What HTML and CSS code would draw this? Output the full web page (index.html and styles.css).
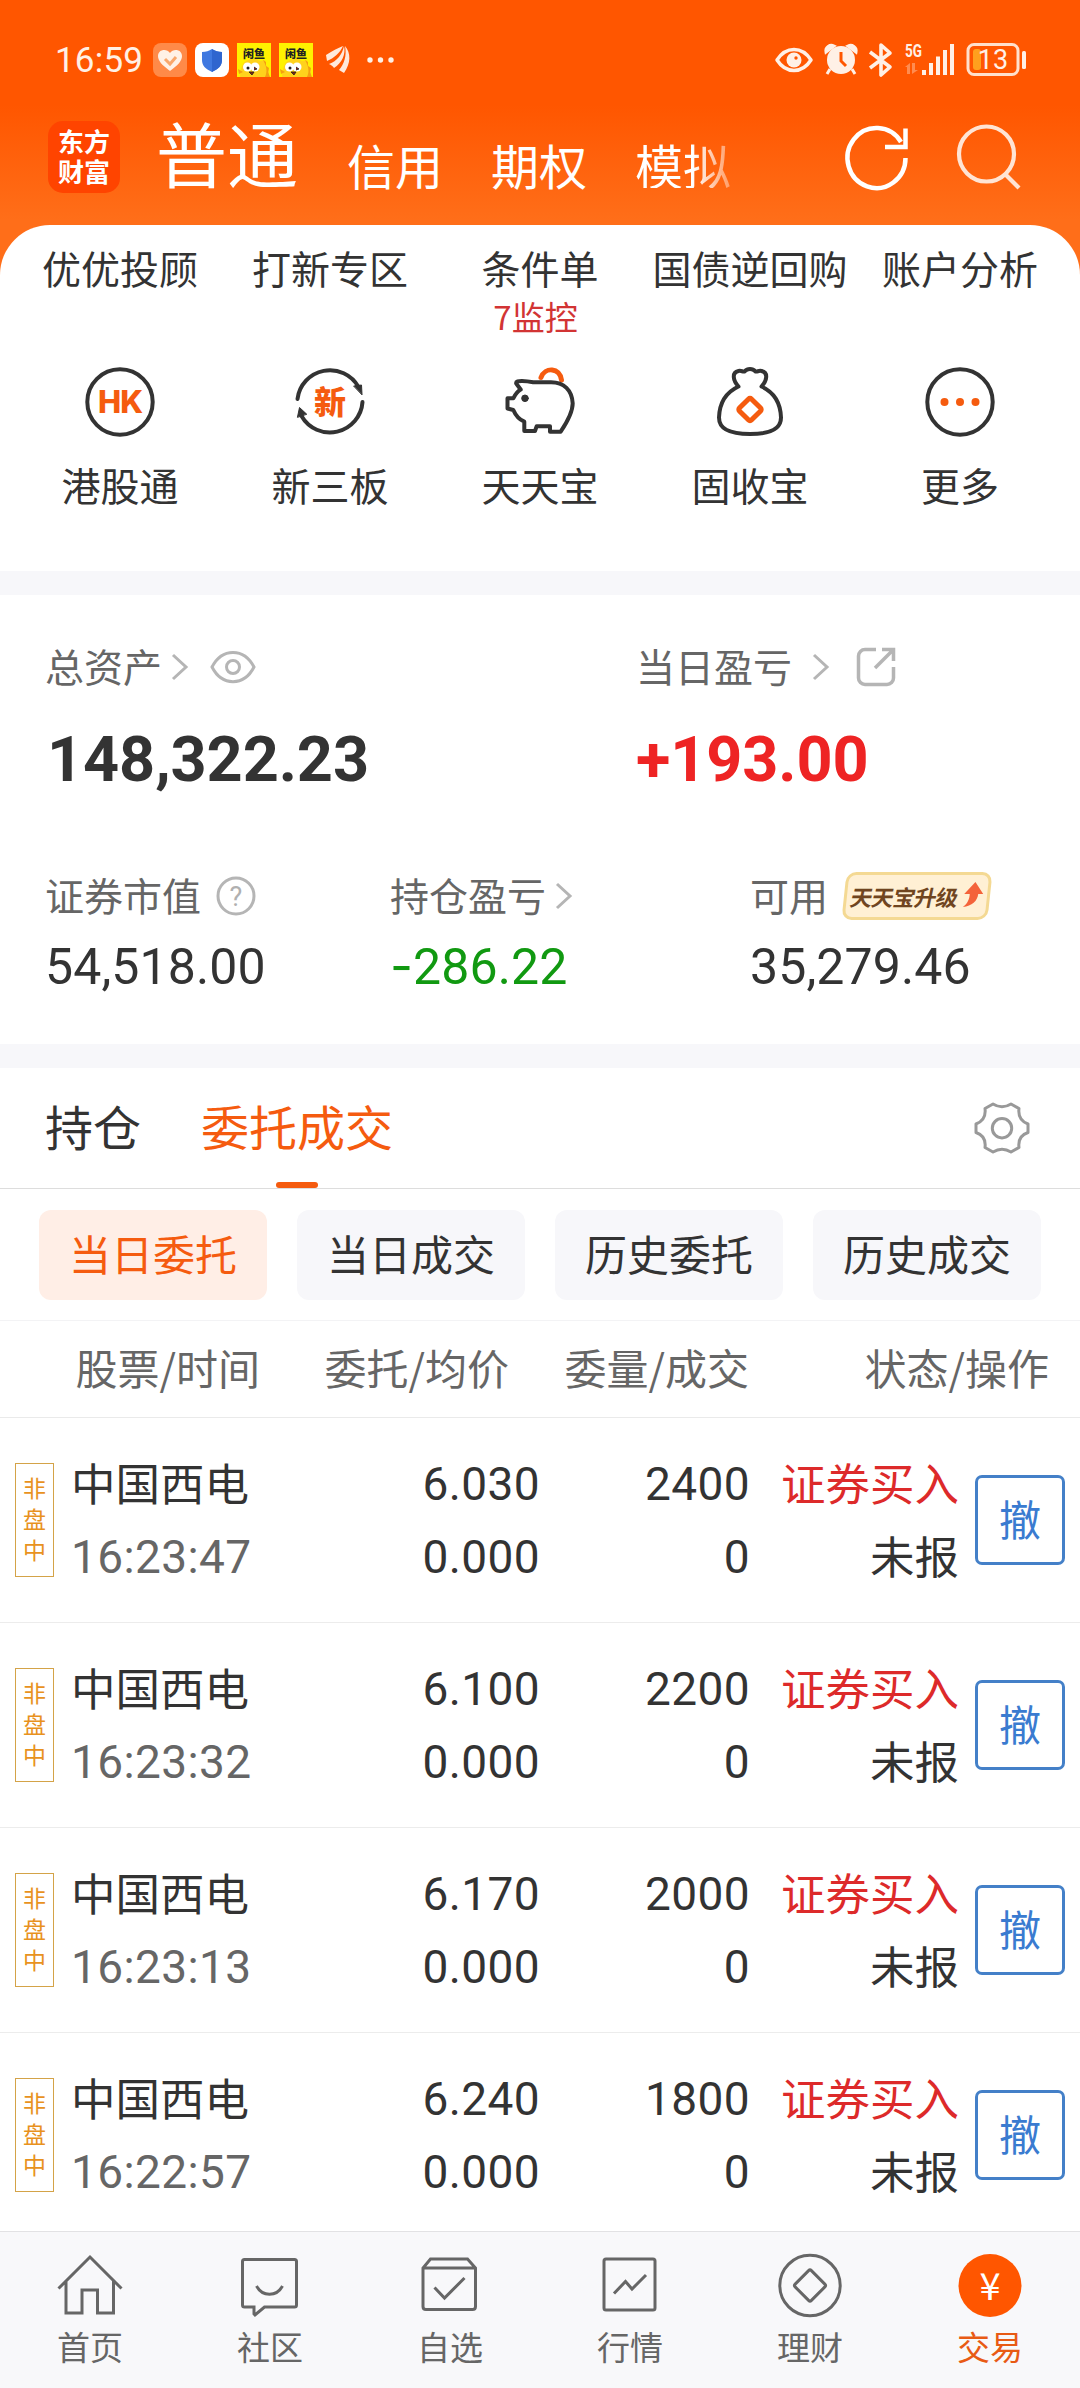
FILE: index.html
```
<!DOCTYPE html>
<html lang="zh-CN">
<head>
	<meta charset="utf-8">
	<title>交易</title>
	<link rel="stylesheet" href="styles.css">
</head>
<body>
	<div class="header">
		<div class="status-bar">
			<span class="clock num">16:59</span>
			<div class="notices">
				<svg width="34" height="34" viewBox="0 0 34 34">
					<rect width="34" height="34" rx="8" fill="#ff8a48"/>
					<path d="M17 28C9 22 5 18 5 13c0-7 9-8 12-3 3-5 12-4 12 3 0 5-4 9-12 15z" fill="#fff1e6"/>
					<path d="M12 16l5 5 6-7" fill="none" stroke="#f9a76c" stroke-width="3"/>
				</svg>
				<svg width="34" height="34" viewBox="0 0 34 34">
					<rect width="34" height="34" rx="8" fill="#fff"/>
					<path d="M17 6c3 2 6 3 10 3v8c0 6-4 9-10 12C11 26 7 23 7 17V9c4 0 7-1 10-3z" fill="#3f78e0"/>
					<path d="M17 6c3 2 6 3 10 3v8c0 6-4 9-10 12z" fill="#2f65cf"/>
				</svg>
				<svg class="fish" width="34" height="34" viewBox="0 0 34 34">
					<rect width="34" height="34" fill="#fff200"/>
					<text x="17" y="14.5" text-anchor="middle">闲鱼</text>
					<path d="M3 34c1-9 2-15 8-17 5-2 9-1 12 1l5-1 1 5 3 4v8z" fill="#ffd21c"/>
					<path d="M26 17l3 2v4l3 2-1 4 2 5h-5c3-6 1-12-2-17z" fill="#f5a010"/>
					<circle cx="10.500" cy="24" r="4.500" fill="#fff"/><circle cx="18" cy="24" r="4.500" fill="#fff"/>
					<circle cx="11" cy="25" r="1.500" fill="#222"/>
					<path d="M17 24l3 2-3 1M12 29h5l-2 3z" fill="#8a1f10" stroke="#222" stroke-width=".8"/>
					<path d="M1 26l5 3-4 2z" fill="#f5a010"/>
				</svg>
				<svg class="fish" width="34" height="34" viewBox="0 0 34 34">
					<rect width="34" height="34" fill="#fff200"/>
					<text x="17" y="14.5" text-anchor="middle">闲鱼</text>
					<path d="M3 34c1-9 2-15 8-17 5-2 9-1 12 1l5-1 1 5 3 4v8z" fill="#ffd21c"/>
					<path d="M26 17l3 2v4l3 2-1 4 2 5h-5c3-6 1-12-2-17z" fill="#f5a010"/>
					<circle cx="10.500" cy="24" r="4.500" fill="#fff"/><circle cx="18" cy="24" r="4.500" fill="#fff"/>
					<circle cx="11" cy="25" r="1.500" fill="#222"/>
					<path d="M17 24l3 2-3 1M12 29h5l-2 3z" fill="#8a1f10" stroke="#222" stroke-width=".8"/>
					<path d="M1 26l5 3-4 2z" fill="#f5a010"/>
				</svg>
				<svg class="wing" width="26" height="28" viewBox="0 0 26 28" fill="#ffe9dc">
					<path d="M1 9C7 5 13 2 18 0c-3 7-9 12-16 15zM4 18c8-3 13-9 15-18 2 8-2 17-10 22-1-2-3-3-5-4zM14 24c5-6 8-14 6-24 6 7 6 17-1 27z"/>
				</svg>
				<svg width="28" height="8" viewBox="0 0 28 8" fill="#fff0e6">
					<circle cx="3" cy="4" r="2.700"/><circle cx="13.500" cy="4" r="2.700"/><circle cx="24" cy="4" r="2.700"/>
				</svg>
			</div>
			<svg class="system" width="254" height="36" viewBox="0 0 254 36" fill="#fff0e6">
				<!-- eye -->
				<path d="M3 18C12 4 28 4 37 18 28 32 12 32 3 18z" fill="none" stroke="#fff0e6" stroke-width="3.500" stroke-linejoin="round"/>
				<circle cx="20" cy="18" r="7.500"/><circle cx="22" cy="16" r="1.700" fill="#ff5600"/>
				<!-- alarm -->
				<circle cx="67" cy="18" r="14"/>
				<path d="M52 10c-1-5 4-8 8-6zM82 10c1-5-4-8-8-6zM56 27l-3 5M78 27l3 5" stroke="#fff0e6" stroke-width="3"/>
				<path d="M67 10v9l5 5" fill="none" stroke="#ff5600" stroke-width="3"/>
				<!-- bluetooth -->
				<path d="M96 10l20 15-9 8V3l9 8-20 15" fill="none" stroke="#fff0e6" stroke-width="3.600" stroke-linejoin="round"/>
				<text class="net" x="131" y="15" textLength="17" lengthAdjust="spacingAndGlyphs">5G</text>
				<path d="M131 25l5-4v11h-3v-7zM138 21h3v7h3l-6 4z" opacity=".35"/>
				<path d="M148 28h4v5h-4zM155 21h4v12h-4zM162 14.500h4V33h-4zM169 8h4v25h-4zM176 2h4v31h-4z"/>
				<!-- battery -->
				<rect x="194" y="2.500" width="50" height="30" rx="6" fill="none" stroke="#ffe0cc" stroke-width="3"/>
				<rect x="199" y="7" width="8" height="21" rx="3" fill="#ffa01e"/>
				<text class="level" x="219" y="27" text-anchor="middle">13</text>
				<rect x="248" y="9" width="4" height="18" rx="1.500"/>
			</svg>
		</div>

		<div class="top-nav">
			<div class="brand">东方<br>财富</div>
			<div class="accounts">
				<span class="account current">普通</span>
				<span class="account">信用</span>
				<span class="account">期权</span>
				<span class="account faded">模拟</span>
			</div>
			<div class="top-actions">
				<svg width="64" height="68" viewBox="0 0 64 68" fill="none" stroke="#fff" stroke-width="4.500">
					<path d="M60.500 34A29 30 0 1 1 56 18M40 23h20.500V4.500"/>
				</svg>
				<svg width="64" height="68" viewBox="0 0 64 68" fill="none" stroke="#ffe4d4" stroke-width="4.200">
					<circle cx="29.500" cy="30" r="27.500"/><path d="M48 50l14 14"/>
				</svg>
			</div>
		</div>
	</div>

	<div class="shortcuts">
		<div class="shortcut">优优投顾</div>
		<div class="shortcut">打新专区</div>
		<div class="shortcut">条件单<span class="monitor">7监控</span></div>
		<div class="shortcut">国债逆回购</div>
		<div class="shortcut">账户分析</div>

		<div class="shortcut">
			<svg class="ico" width="70" height="70" viewBox="0 0 70 70">
				<circle cx="35" cy="35" r="32.700"/>
				<text class="hk" x="35" y="46" text-anchor="middle">HK</text>
			</svg>
			港股通
		</div>
		<div class="shortcut">
			<svg class="ico" width="70" height="70" viewBox="0 0 70 70">
				<path d="M2.500 32a32.700 32.700 0 0 1 61-12M67.500 35a32.700 32.700 0 0 1-61 14"/>
				<path class="dark" d="M59 19l7.500-1 .5 9.500zM2.500 50l2-9.500 7 6.500z"/>
				<text class="xin" x="35" y="46.500" text-anchor="middle">新</text>
			</svg>
			新三板
		</div>
		<div class="shortcut">
			<svg class="ico" width="70" height="70" viewBox="0 0 70 70">
				<path class="org" d="M36 10.500c4-11 19-10 20.500 2.500"/>
				<path d="M15.700 22.500l-4.500-6c-1-4 11-2.500 17-1.200H46c13 0 21 8 21.700 21 0 9-5 18-12 28.400H45v-5.500H31.700L30 64H19.300v-9.300C13 52 10 47 8.300 43L2.500 41.500v-10.200h5.800c2-4 4-7 7.400-8.800z"/>
				<circle class="dark" cx="20" cy="31.300" r="3.300"/>
			</svg>
			天天宝
		</div>
		<div class="shortcut">
			<svg class="ico" width="70" height="70" viewBox="0 0 70 70">
				<path d="M23.500 19.500c-5.500-6-7-14 0-15.500 3-.7 4 1 6 .5 3-3.500 8-3.500 11 0 2 .5 3-1.200 6-.5 7 1.500 5.500 9.500 0 15.500 13 6 19 16 19.500 31C66 62 56 67 35 67S4 62 4 50.500c.5-15 6.500-25 19.500-31z"/>
				<rect class="org" x="26.500" y="34" width="17" height="17" rx="2" transform="rotate(45 35 42.500)"/>
			</svg>
			固收宝
		</div>
		<div class="shortcut">
			<svg class="ico" width="70" height="70" viewBox="0 0 70 70">
				<circle cx="35" cy="35" r="32.700"/>
				<g class="dot"><circle cx="19.500" cy="35" r="4"/><circle cx="35" cy="35" r="4"/><circle cx="50.500" cy="35" r="4"/></g>
			</svg>
			更多
		</div>
	</div>

	<div class="assets">
		<div class="totals">
			<div>
				<div class="label">总资产
					<svg class="arrow" width="18" height="28" viewBox="0 0 18 28"><path d="M2 2l13 12L2 26"/></svg>
					<svg class="eye" width="46" height="34" viewBox="0 0 46 34"><path d="M2 17C12-2.500 34-2.500 44 17 34 36.500 12 36.500 2 17z"/><circle cx="23" cy="17" r="6.500"/></svg>
				</div>
				<div class="total num">148,322.23</div>
			</div>
			<div>
				<div class="label">当日盈亏
					<svg class="arrow wide" width="18" height="28" viewBox="0 0 18 28"><path d="M2 2l13 12L2 26"/></svg>
					<svg class="share" width="40" height="40" viewBox="0 0 40 40"><path d="M20 2.500H9a6.500 6.500 0 0 0-6.500 6.500v22A6.500 6.500 0 0 0 9 37.500h22a6.500 6.500 0 0 0 6.500-6.500V20M26 2.500h11.500V14M37 3L19 21"/></svg>
				</div>
				<div class="total num up">+193.00</div>
			</div>
		</div>
		<div class="details">
			<div>
				<div class="label">证券市值
					<svg class="help" width="40" height="40" viewBox="0 0 40 40"><circle cx="20" cy="20" r="18"/><text x="20" y="29.500" text-anchor="middle">?</text></svg>
				</div>
				<div class="amount num">54,518.00</div>
			</div>
			<div>
				<div class="label">持仓盈亏
					<svg class="arrow" width="18" height="28" viewBox="0 0 18 28"><path d="M2 2l13 12L2 26"/></svg>
				</div>
				<div class="amount num down"><span class="sign">-</span>286.22</div>
			</div>
			<div>
				<div class="label">可用
					<span class="upgrade"><b>天天宝升级</b>
						<svg width="20" height="26" viewBox="0 0 20 26"><path d="M11 0l9 12h-5c0 7-5 12-14 13 4-3 6-8 5.500-13H1z" fill="#f4633a"/></svg>
					</span>
				</div>
				<div class="amount num">35,279.46</div>
			</div>
		</div>
	</div>

	<div class="tabs">
		<span class="tab">持仓</span>
		<span class="tab active">委托成交</span>
		<svg class="gear" width="56" height="52" viewBox="0 0 56 52">
			<path d="M19 2Q28 7.500 37 2l8 4.500Q43.500 18 54 22v8.500Q43.500 34 45 45.500L37 50Q28 44.500 19 50l-8-4.500Q12.500 34 2 30.500V22Q12.500 18 11 6.500z"/>
			<circle cx="28" cy="26.200" r="9.700"/>
		</svg>
	</div>
	<div class="chips">
		<span class="chip active">当日委托</span>
		<span class="chip">当日成交</span>
		<span class="chip">历史委托</span>
		<span class="chip">历史成交</span>
	</div>

	<div class="orders">
		<div class="thead">
			<span>股票/时间</span><span>委托/均价</span><span>委量/成交</span><span>状态/操作</span>
		</div>
		<div class="order">
			<span class="tag">非盘中</span>
			<div class="stock"><div class="zh">中国西电</div><div class="time num">16:23:47</div></div>
			<div class="num">6.030<br>0.000</div>
			<div class="num">2400<br>0</div>
			<div><div class="zh buy">证券买入</div><div class="zh">未报</div></div>
			<span class="cancel">撤</span>
		</div>
		<div class="order">
			<span class="tag">非盘中</span>
			<div class="stock"><div class="zh">中国西电</div><div class="time num">16:23:32</div></div>
			<div class="num">6.100<br>0.000</div>
			<div class="num">2200<br>0</div>
			<div><div class="zh buy">证券买入</div><div class="zh">未报</div></div>
			<span class="cancel">撤</span>
		</div>
		<div class="order">
			<span class="tag">非盘中</span>
			<div class="stock"><div class="zh">中国西电</div><div class="time num">16:23:13</div></div>
			<div class="num">6.170<br>0.000</div>
			<div class="num">2000<br>0</div>
			<div><div class="zh buy">证券买入</div><div class="zh">未报</div></div>
			<span class="cancel">撤</span>
		</div>
		<div class="order">
			<span class="tag">非盘中</span>
			<div class="stock"><div class="zh">中国西电</div><div class="time num">16:22:57</div></div>
			<div class="num">6.240<br>0.000</div>
			<div class="num">1800<br>0</div>
			<div><div class="zh buy">证券买入</div><div class="zh">未报</div></div>
			<span class="cancel">撤</span>
		</div>
	</div>

	<div class="bottom-nav">
		<div class="nav-item">
			<svg width="64" height="66" viewBox="0 0 64 66"><path d="M.5 35.500L32 4l31.500 31.500M8 28v32h16V37h15.500v23h16V28"/></svg>
			首页
		</div>
		<div class="nav-item">
			<svg width="64" height="66" viewBox="0 0 64 66"><path d="M6.500 6.500h50q2 0 2 2V52q0 2-2 2h-30l-9.500 8-1-1v-7H6.500q-2 0-2-2V8.500q0-2 2-2zM18.500 33c6 11 20 11 26 0"/></svg>
			社区
		</div>
		<div class="nav-item">
			<svg width="64" height="66" viewBox="0 0 64 66"><path d="M12.500 6h37l8 9v38.500q0 3-3 3H8q-3 0-3-3V15zM5 15h52M16.500 34.500l10 10.500 20-20"/></svg>
			自选
		</div>
		<div class="nav-item">
			<svg width="64" height="66" viewBox="0 0 64 66"><rect x="6" y="6" width="51" height="51" rx="2"/><path d="M16 40.500l11.500-12L34 36l14-14"/></svg>
			行情
		</div>
		<div class="nav-item">
			<svg width="64" height="66" viewBox="0 0 64 66"><circle cx="32" cy="32.500" r="30.200"/><rect x="20.500" y="21" width="23" height="23" rx="2" transform="rotate(45 32 32.500)"/></svg>
			理财
		</div>
		<div class="nav-item active">
			<svg width="64" height="66" viewBox="0 0 64 66"><circle cx="32" cy="32.500" r="31.500"/><text x="32" y="47" text-anchor="middle">¥</text></svg>
			交易
		</div>
	</div>
</body>
</html>
```
FILE: styles.css
```
* {
	box-sizing: border-box;
}
body {
	margin: 0;
	width: 1080px;
	height: 2388px;
	overflow: hidden;
	display: flex;
	flex-direction: column;
	background: #fff;
	color: #333;
	font-family: "Noto Sans CJK SC", sans-serif;
	font-size: 39px;
}
svg {
	display: block;
	flex: none;
	overflow: visible;
}
.num {
	font-family: Roboto, "Noto Sans CJK SC", sans-serif;
}

/* header */
.header {
	height: 275px;
	margin-bottom: -50px;
	flex: none;
	background: linear-gradient(#ff5600 0, #ff5600 105px, #ff6e19 220px);
}
.status-bar {
	height: 112px;
	padding: 8px 52px 0 55px;
	display: flex;
	align-items: center;
}
.clock {
	width: 98px;
	color: #fff0e6;
	font-size: 35px;
	letter-spacing: .2px;
}
.notices {
	display: flex;
	align-items: center;
	gap: 8px;
}
.wing {
	margin-left: 4px;
	margin-right: 8px;
}
.system {
	margin-left: auto;
}
.fish text {
	font-size: 11px;
	font-weight: 900;
	fill: #222;
}
.net {
	font: bold 18px Roboto, sans-serif;
}
.level {
	font: 27px Roboto, sans-serif;
}
.top-nav {
	display: flex;
	padding: 0 59px 0 48px;
}
.brand {
	width: 72px;
	height: 72px;
	margin-top: 9px;
	padding: 5px 0;
	border-radius: 15px;
	background: #ff4400;
	color: #fff;
	font-size: 26px;
	font-weight: 700;
	line-height: 30px;
	text-align: center;
}
.accounts {
	display: flex;
	align-items: flex-end;
	height: 76px;
	margin-left: 36px;
	color: #fff;
}
.account {
	font-size: 48px;
	line-height: 48px;
	margin-right: 48px;
}
.account.current {
	font-size: 71px;
	line-height: 73px;
	margin-right: 49px;
}
.account.faded {
	background: linear-gradient(90deg, #fff 60%, rgba(255,255,255,.35));
	-webkit-background-clip: text;
	background-clip: text;
	color: transparent;
	margin-right: 0;
}
.top-actions {
	display: flex;
	gap: 48px;
	margin-left: auto;
	padding-top: 12px;
}

/* shortcuts */
.shortcuts {
	position: relative;
	flex: none;
	height: 346px;
	padding: 20px 15px 0;
	border-radius: 50px 50px 0 0;
	background: #fff;
	display: grid;
	grid-template-columns: repeat(5, 210px);
	grid-template-rows: 91px 139px;
	row-gap: 31px;
}
.shortcut {
	display: flex;
	flex-direction: column;
	align-items: center;
	line-height: 44px;
	white-space: nowrap;
}
.monitor {
	margin-top: 7px;
	padding-right: 9px;
	color: #d23434;
	font-size: 33px;
	line-height: 40px;
}
.ico {
	margin-bottom: 25px;
	fill: none;
	stroke: #333;
	stroke-width: 4;
	stroke-linejoin: round;
	stroke-linecap: round;
}
.ico text, .ico .dot {
	fill: #f55b0f;
	stroke: none;
}
.ico .hk {
	font: 800 31px Inter, sans-serif;
	letter-spacing: -1px;
}
.ico .xin {
	font-size: 32px;
	font-weight: 900;
}
.ico .org {
	stroke: #f55b0f;
	stroke-width: 5;
}
.ico .dark {
	fill: #333;
	stroke-width: 1;
}

/* assets */
.assets {
	flex: none;
	height: 497px;
	padding: 48px 45px 0;
	border-top: 24px solid #f7f7fa;
	border-bottom: 24px solid #f7f7fa;
}
.totals {
	display: grid;
	grid-template-columns: 591px 1fr;
}
.details {
	display: grid;
	grid-template-columns: 345px 360px 1fr;
	margin-top: 75px;
}
.label {
	display: flex;
	align-items: center;
	height: 44px;
	line-height: 44px;
	color: #666;
	white-space: nowrap;
}
.details .label {
	height: 48px;
}
.label svg {
	fill: none;
	stroke: #b5b5b5;
	stroke-width: 3;
	position: relative;
	top: 2px;
}
.arrow {
	margin-left: 9px;
}
.arrow.wide {
	margin-left: 20px;
}
.label .eye {
	margin-left: 21px;
}
.label .share {
	margin-left: 26px;
	stroke-width: 3.500;
}
.label .help {
	margin-left: 15px;
}
.help text {
	font: 27px Roboto, sans-serif;
	fill: #b0b0b0;
	stroke: none;
}
.total {
	margin-top: 38px;
	padding-left: 2px;
	font-size: 63px;
	font-weight: 700;
	line-height: 70px;
	letter-spacing: -.1px;
}
.total.up {
	padding-left: 0;
	color: #ee2424;
}
.amount {
	margin-top: 21px;
	font-size: 50px;
	line-height: 56px;
	letter-spacing: .1px;
}
.down {
	color: #119911;
}
.sign {
	font-family: Inter, sans-serif;
	line-height: 1;
}
.upgrade {
	display: flex;
	align-items: center;
	justify-content: center;
	width: 146px;
	height: 48px;
	margin: 4px 0 0 16px;
	border: 3px solid #f4d993;
	border-radius: 10px;
	background: #fff0d4;
	transform: skewX(-6deg);
	color: #70451f;
	font-size: 22px;
	line-height: 38px;
}
.upgrade b {
	transform: skewX(-6deg);
	letter-spacing: -.6px;
}
.upgrade svg {
	margin-left: 4px;
	stroke: none;
	top: -1px;
}

/* tabs */
.tabs {
	flex: none;
	display: flex;
	height: 121px;
	padding: 0 50px 0 45px;
	border-bottom: 1px solid #ddd;
	font-size: 48px;
	line-height: 114px;
}
.tab {
	position: relative;
	margin-right: 60px;
}
.tab.active {
	color: #f55b0f;
}
.tab.active::after {
	content: "";
	position: absolute;
	left: 75px;
	bottom: 0;
	width: 42px;
	height: 6px;
	border-radius: 3px;
	background: #f55b0f;
}
.gear {
	margin: 34px 0 0 auto;
	fill: none;
	stroke: #999;
	stroke-width: 3;
	stroke-linejoin: round;
}
.chips {
	flex: none;
	display: flex;
	gap: 30px;
	height: 132px;
	padding: 21px 39px 0;
	border-bottom: 1px solid #f3f3f5;
}
.chip {
	width: 228px;
	height: 90px;
	border-radius: 12px;
	background: #f7f7fa;
	font-size: 42px;
	line-height: 86px;
	text-align: center;
}
.chip.active {
	background: #ffeee6;
	color: #f55b0f;
}

/* orders */
.orders {
	flex: 1;
	min-height: 0;
	overflow: hidden;
}
.thead {
	display: grid;
	grid-template-columns: 260px 249px 240px 300px;
	height: 97px;
	border-bottom: 1px solid #eaeaea;
	color: #666;
	font-size: 42px;
	line-height: 92px;
	text-align: right;
}
.order {
	display: grid;
	grid-template-columns: 39px 210px 276px 210px 209px 106px;
	padding: 30px 15px 0;
	height: 205px;
	border-bottom: 1px solid #ececec;
	font-size: 44.5px;
	line-height: 73px;
	text-align: right;
}
.order .num {
	font-size: 46px;
	letter-spacing: .4px;
}
.order .stock {
	padding-left: 17px;
	text-align: left;
}
.order .zh {
	height: 73px;
	line-height: 68px;
	white-space: nowrap;
}
.order .time {
	color: #666;
}
.buy {
	color: #dd2a2a;
}
.tag {
	width: 39px;
	height: 114px;
	margin-top: 15px;
	padding: 8px 7px;
	border: 1px solid #d4a348;
	color: #e8921e;
	font-size: 23px;
	line-height: 31px;
	text-align: center;
	word-break: break-all;
}
.cancel {
	width: 90px;
	height: 90px;
	margin: 27px 0 0 16px;
	border: 3px solid #4480c8;
	border-radius: 7px;
	color: #3a7bd0;
	font-size: 42px;
	line-height: 80px;
	text-align: center;
}

/* bottom nav */
.bottom-nav {
	flex: none;
	display: grid;
	grid-template-columns: repeat(6, 180px);
	height: 157px;
	padding-top: 21px;
	border-top: 1px solid #e2e2e4;
	background: #f8f8fa;
	color: #666;
	font-size: 33px;
}
.nav-item {
	display: flex;
	flex-direction: column;
	align-items: center;
	line-height: 40px;
}
.nav-item svg {
	margin-bottom: 7px;
	fill: none;
	stroke: #666;
	stroke-width: 3;
}
.nav-item.active {
	color: #e85a14;
}
.nav-item.active circle {
	fill: #ff5600;
	stroke: none;
}
.nav-item.active text {
	fill: #fff;
	stroke: none;
	font-size: 38px;
}
```
